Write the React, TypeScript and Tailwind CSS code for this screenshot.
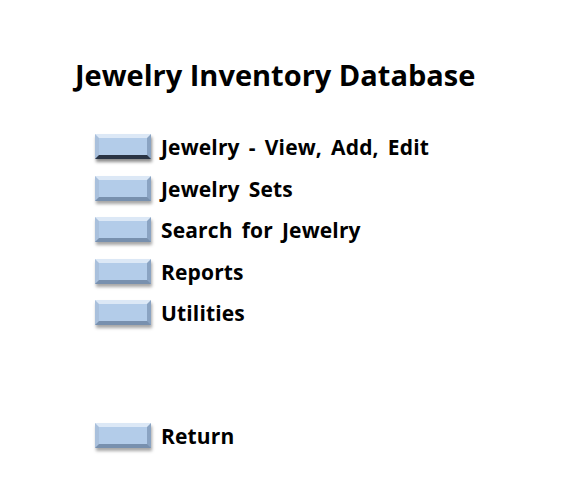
import React from "react";

function Btn({ dark }: { dark?: boolean }) {
  return (
    <div
      className={
        "w-[56px] h-[25px] bg-[#b3cce9] border-[4px] border-t-[#dce8f6] border-l-[#a9c0dc] border-r-[#8aa3c2] " +
        (dark
          ? "border-b-[#2a3444] shadow-[1px_3px_3px_rgba(0,0,0,0.45)]"
          : "border-b-[#7890ae] shadow-[1px_3px_3px_rgba(0,0,0,0.35)]")
      }
    />
  );
}

const items = [
  "Jewelry - View, Add, Edit",
  "Jewelry Sets",
  "Search for Jewelry",
  "Reports",
  "Utilities",
];

export default function App() {
  return (
    <div className="w-[568px] h-[488px] bg-white text-black font-['Open_Sans',sans-serif] relative">
      <div className="pt-[57px] pl-[75px]">
        <h1 className="text-[29px] font-bold leading-[36px]">
          Jewelry Inventory Database
        </h1>
      </div>
      <div className="pl-[95px] pt-[41px] flex flex-col gap-[16.5px]">
        {items.map((t, i) => (
          <div key={t} className="flex items-center gap-[10px] h-[25px]">
            <Btn dark={i === 0} />
            <span className="text-[21px] font-bold leading-[25px] pt-[2px] tracking-[0.15px] [word-spacing:3.5px]">{t}</span>
          </div>
        ))}
      </div>
      <div className="pl-[95px] pt-[98px]">
        <div className="flex items-center gap-[10px] h-[25px]">
          <Btn />
          <span className="text-[21px] font-bold leading-[25px] pt-[2px] tracking-[0.15px]">Return</span>
        </div>
      </div>
    </div>
  );
}
